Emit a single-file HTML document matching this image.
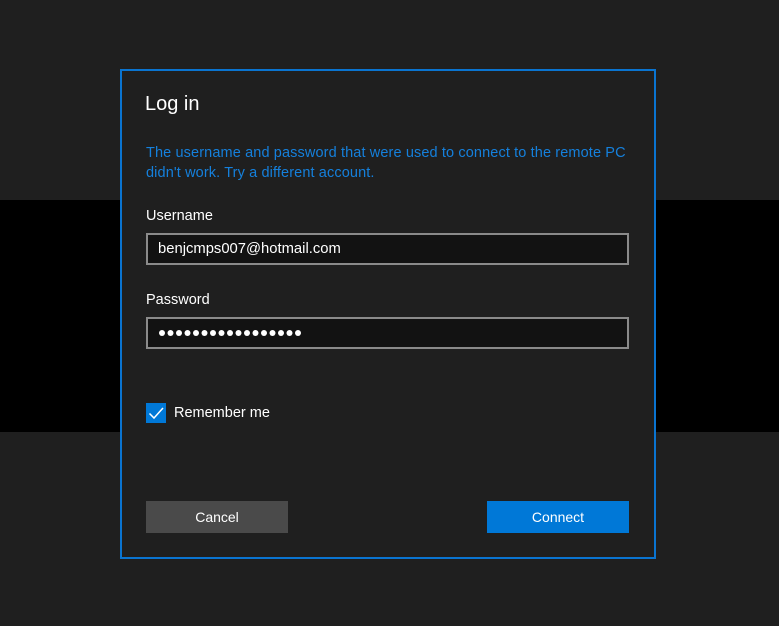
<!DOCTYPE html>
<html><head><style>
body{margin:0;width:779px;height:626px;background:#1f1f1f;position:relative;overflow:hidden;font-family:"Liberation Sans",sans-serif;}
.band{position:absolute;left:0;top:200px;width:779px;height:232px;background:#000}
.dlg{position:absolute;left:120px;top:69px;width:532px;height:486px;border:2px solid #0a74d0;background:#1f1f1f}
.a{position:absolute;color:#fff;white-space:nowrap}
.inp{position:absolute;left:146px;width:479px;height:28px;border:2px solid #8a8a8a;background:#121212}
.btn{position:absolute;top:501px;width:142px;height:32px;color:#fff;font-size:14px;text-align:center;line-height:33px}
</style></head><body>
<div class="band"></div>
<div class="dlg"></div>
<div class="a" style="left:145px;top:93px;font-size:20px">Log in</div>
<div class="a" style="left:146px;top:143px;font-size:14.5px;line-height:20px;color:#1580dc;letter-spacing:0.12px">The username and password that were used to connect to the remote PC<br>didn't work. Try a different account.</div>
<div class="a" style="left:146px;top:208px;font-size:14.5px">Username</div>
<div class="inp" style="top:233px"></div>
<div class="a" style="left:158px;top:241px;font-size:14.8px">benjcmps007@hotmail.com</div>
<div class="a" style="left:146px;top:292px;font-size:14.5px">Password</div>
<div class="inp" style="top:317px"></div>
<svg style="position:absolute;left:150px;top:325px" width="160" height="16" fill="#fff">
<g id="d"></g>
<circle cx="12" cy="8" r="3"/><circle cx="20.5" cy="8" r="3"/><circle cx="29" cy="8" r="3"/><circle cx="37.5" cy="8" r="3"/><circle cx="46" cy="8" r="3"/><circle cx="54.5" cy="8" r="3"/><circle cx="63" cy="8" r="3"/><circle cx="71.5" cy="8" r="3"/><circle cx="80" cy="8" r="3"/><circle cx="88.5" cy="8" r="3"/><circle cx="97" cy="8" r="3"/><circle cx="105.5" cy="8" r="3"/><circle cx="114" cy="8" r="3"/><circle cx="122.5" cy="8" r="3"/><circle cx="131" cy="8" r="3"/><circle cx="139.5" cy="8" r="3"/><circle cx="148" cy="8" r="3"/>
</svg>
<div style="position:absolute;left:146px;top:403px;width:20px;height:20px;background:#0078d7"></div>
<svg style="position:absolute;left:146px;top:403px" width="20" height="20"><path d="M3.5 10.5 L8 15 L17 5" stroke="#fff" stroke-width="1.5" fill="none"/></svg>
<div class="a" style="left:174px;top:405px;font-size:14.5px">Remember me</div>
<div class="btn" style="left:146px;background:#4a4a4a">Cancel</div>
<div class="btn" style="left:487px;background:#0078d7">Connect</div>
</body></html>
